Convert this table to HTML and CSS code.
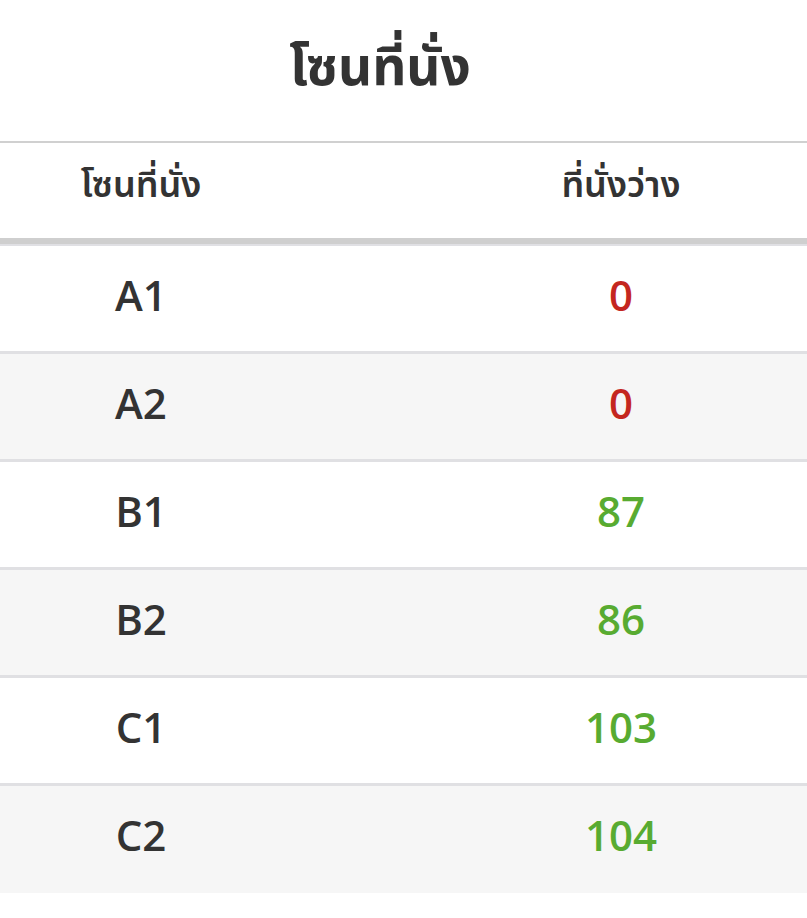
FILE: index.html
```html
<!DOCTYPE html>
<html lang="th">
<head>
<meta charset="utf-8">
<link rel="stylesheet" href="styles.css">
</head>
<body>
<div class="page">
  <h1 class="title">โซนที่นั่ง</h1>
  <div class="table">
    <div class="row head">
      <div class="cell zone">โซนที่นั่ง</div>
      <div class="cell seats">ที่นั่งว่าง</div>
    </div>
    <div class="row">
      <div class="cell zone">A1</div>
      <div class="cell seats red">0</div>
    </div>
    <div class="row alt">
      <div class="cell zone">A2</div>
      <div class="cell seats red">0</div>
    </div>
    <div class="row">
      <div class="cell zone">B1</div>
      <div class="cell seats green">87</div>
    </div>
    <div class="row alt">
      <div class="cell zone">B2</div>
      <div class="cell seats green">86</div>
    </div>
    <div class="row">
      <div class="cell zone">C1</div>
      <div class="cell seats green">103</div>
    </div>
    <div class="row alt last">
      <div class="cell zone">C2</div>
      <div class="cell seats green">104</div>
    </div>
  </div>
</div>
</body>
</html>
```
FILE: styles.css
```css
html, body {
  margin: 0;
  padding: 0;
  background: #fff;
}
body {
  font-family: "Open Sans", "Noto Sans", "Noto Sans Thai", sans-serif;
  color: #333;
}
.page {
  width: 807px;
}
.title {
  margin: 0;
  height: 141px;
  display: flex;
  align-items: center;
  justify-content: center;
  font-size: 53px;
  font-weight: 700;
  color: #333;
  padding: 0 47px 4px 0;
  box-sizing: border-box;
}
.table {
  border-top: 2px solid #d0d0d0;
}
.row {
  display: grid;
  grid-template-columns: 282px 1fr;
  height: 105px;
  border-bottom: 3px solid #e0e0e3;
  align-items: center;
}
.row.alt {
  background: #f6f6f6;
}
.row.last {
  height: 107px;
  border-bottom: none;
}
.row.head {
  height: 95px;
  border-bottom: 6px solid #cfcfcf;
  box-shadow: 0 2px 0 #e0e0e4;
  margin-bottom: 2px;
}
.cell {
  text-align: center;
  font-size: 42px;
  font-weight: 600;
  padding-bottom: 8px;
}
.last .cell {
  padding-bottom: 10px;
}
.head .cell {
  font-size: 36px;
  font-weight: 600;
  padding-bottom: 10px;
}
.seats {
  padding-left: 153px;
}
.red { color: #c4271f; }
.green { color: #58ab31; }
```
